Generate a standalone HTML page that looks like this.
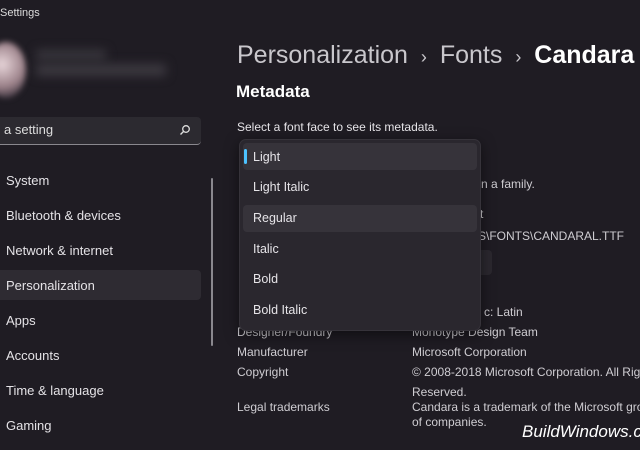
<!DOCTYPE html>
<html><head><style>
body{margin:0;width:640px;height:450px;background:#1f1c23;overflow:hidden;position:relative;font-family:"Liberation Sans",sans-serif;color:#e8e6ea}
.a{position:absolute;white-space:nowrap}
.s{font-size:13px;color:#e4e2e6}
.m{font-size:12px;color:#cfcdd2}
.dd div.i{position:absolute;left:13px;font-size:12.5px;color:#e6e4e8}
</style></head><body>
<div class="a" style="left:0;top:7px;font-size:11px;color:#ddd">Settings</div>
<div class="a" style="left:-14px;top:42px;width:40px;height:56px;border-radius:50%;background:radial-gradient(circle at 40% 40%,#e8d6da,#9a8088 55%,#2a2530 90%);filter:blur(3px)"></div>
<div class="a" style="left:36px;top:50px;width:70px;height:10px;background:#3a373e;filter:blur(5px)"></div>
<div class="a" style="left:36px;top:64px;width:130px;height:12px;background:#3c3940;filter:blur(5px)"></div>
<div class="a" style="left:-6px;top:117px;width:207px;height:27px;background:#2c2a30;border-radius:4px;border-bottom:1px solid #8a888e"></div>
<div class="a" style="left:4px;top:122px;font-size:13px;color:#ddd">a setting</div>
<svg class="a" style="left:179px;top:124px" width="12" height="12" viewBox="0 0 12 12"><circle cx="7" cy="5" r="3.3" fill="none" stroke="#ddd" stroke-width="1.3"/><path d="M4.6 7.4L1.5 10.5" stroke="#ddd" stroke-width="1.4"/></svg>
<div class="a" style="left:-6px;top:270px;width:207px;height:30px;background:#2e2b32;border-radius:4px"></div>
<div class="a s" style="left:6px;top:173px">System</div>
<div class="a s" style="left:6px;top:208px">Bluetooth &amp; devices</div>
<div class="a s" style="left:6px;top:243px">Network &amp; internet</div>
<div class="a s" style="left:6px;top:278px">Personalization</div>
<div class="a s" style="left:6px;top:313px">Apps</div>
<div class="a s" style="left:6px;top:348px">Accounts</div>
<div class="a s" style="left:6px;top:383px">Time &amp; language</div>
<div class="a s" style="left:6px;top:418px">Gaming</div>
<div class="a" style="left:211px;top:178px;width:2px;height:168px;background:#8a888e;border-radius:1px"></div>

<div class="a" style="left:237px;top:41px;font-size:25px;color:#c9c7cc">Personalization <span style="font-size:18px;margin:0 6px">›</span> Fonts <span style="font-size:18px;margin:0 6px">›</span> <span style="color:#fff;font-weight:bold">Candara</span></div>
<div class="a" style="left:236px;top:82px;font-size:17px;font-weight:bold;color:#fff">Metadata</div>
<div class="a" style="left:237px;top:120px;font-size:12px;color:#e6e4e8">Select a font face to see its metadata.</div>

<div class="a m" style="left:481px;top:177px">n a family.</div>
<div class="a m" style="left:480px;top:207px">t</div>
<div class="a m" style="left:478px;top:229px">S\FONTS\CANDARAL.TTF</div>
<div class="a" style="left:470px;top:250px;width:22px;height:25px;background:#2b282f;border-radius:4px"></div>
<div class="a m" style="left:484px;top:305px">c: Latin</div>

<div class="a m" style="left:237px;top:325px">Designer/Foundry</div><div class="a m" style="left:412px;top:325px">Monotype Design Team</div>
<div class="a m" style="left:237px;top:345px">Manufacturer</div><div class="a m" style="left:412px;top:345px">Microsoft Corporation</div>
<div class="a m" style="left:237px;top:365px">Copyright</div><div class="a m" style="left:412px;top:365px">© 2008-2018 Microsoft Corporation. All Rights</div>
<div class="a m" style="left:412px;top:385px">Reserved.</div>
<div class="a m" style="left:237px;top:400px">Legal trademarks</div><div class="a m" style="left:412px;top:400px">Candara is a trademark of the Microsoft group</div>
<div class="a m" style="left:412px;top:415px">of companies.</div>
<div class="a" style="left:522px;top:422px;font-size:17px;font-style:italic;color:#fff">BuildWindows.com</div>

<div class="a dd" style="left:239px;top:139px;width:240px;height:190px;background:#2a272e;border-radius:7px;box-shadow:0 4px 14px rgba(0,0,0,.5);border:1px solid #36333a">
<div class="a" style="left:3px;top:3px;width:234px;height:27px;background:#36333a;border-radius:4px"></div>
<div class="a" style="left:4px;top:9px;width:3px;height:15px;background:#4cc2ff;border-radius:2px"></div>
<div class="a" style="left:3px;top:65px;width:234px;height:27px;background:#36333a;border-radius:4px"></div>
<div class="i" style="top:10px">Light</div>
<div class="i" style="top:40px">Light Italic</div>
<div class="i" style="top:71px">Regular</div>
<div class="i" style="top:102px">Italic</div>
<div class="i" style="top:132px">Bold</div>
<div class="i" style="top:163px">Bold Italic</div>
</div>
</body></html>
